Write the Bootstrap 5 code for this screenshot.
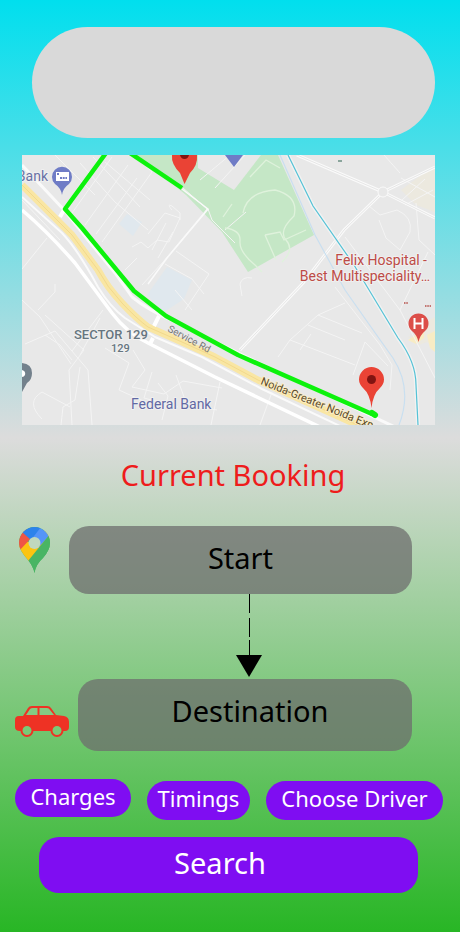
<!DOCTYPE html>
<html lang="en">
<head>
<meta charset="utf-8">
<meta name="viewport" content="width=device-width, initial-scale=1">
<title>Current Booking</title>
<link href="https://cdn.jsdelivr.net/npm/bootstrap@5.3.0/dist/css/bootstrap.min.css" rel="stylesheet">
<style>
body{min-height:100vh;font-family:"Noto Sans","Open Sans",sans-serif;background:linear-gradient(#00dfee 0%,#dcdcdc 47%,#28b625 100%) no-repeat}
.banner{height:111px;margin:27px 25px 17px 32px;background:#d9d9d9}
.map-box{margin:0 25px 0 22px}
.map-box svg{font-family:Roboto,sans-serif}
.page-title,.stop,.pill,.go{font-weight:400}
.page-title{font-size:29px;line-height:40px;margin:30px 0 31px;padding-left:6px;color:#ee1c1c}
.stop-row{padding-right:48px}
.stop-icon{flex:none;width:69px;padding-left:18px}
.car-icon{flex:none;width:78px;padding-left:15px}
.stop{font-size:29px;line-height:40px;border:0;border-radius:20px;background:rgba(110,110,110,.75);color:#000;min-height:68px;padding:10px 12px 14px}
.stop-end{min-height:72px;padding:10px 12px 18px 22px}
.arrow-row{padding-left:38px;height:85px}
.pills{padding:28px 17px 0 15px;gap:16px}
.pill{font-size:22px;line-height:30px;border:0;border-radius:20px;background:#7f0df2;color:#fff;height:39px;padding:2px 0 7px;white-space:nowrap}
.pill-first{height:38px;margin-bottom:3px;padding:2px 0 6px}
.go{font-size:29px;line-height:40px;border:0;border-radius:20px;background:#7f0df2;color:#fff;height:56px;padding:6px 17px 10px 0}
.go-row{padding:17px 42px 39px 39px}
.w-a{flex:116 1 0}.w-b{flex:103 1 0}.w-c{flex:177 1 0}
</style>
</head>
<body>
<main class="d-flex flex-column">
<div class="banner rounded-pill"></div>
<div class="map-box">
<svg class="d-block w-100 h-auto" viewBox="22 155 413 270" role="img" aria-label="Route map">
<rect x="22" y="155" width="413" height="270" fill="#e8e8e8"/>
<path d="M137 155H278L314 235L248 272L222 232L186 195Z" fill="#c5e7c6"/>
<path d="M198 155H261L234 190L198 168Z" fill="#e8e8e8"/>
<path d="M119 224L127 214L142 222L133 236ZM147 295L167 267L192 280L184 299L164 312Z" fill="#e0e8ee"/>
<path d="M401 190L435 165V212L416 205ZM408 337L424 330L424 323L435 317V350L427 342L419 345Z" fill="#ece9df"/>
<path d="M408 340L424 330V338L416 344ZM427 335L435 331V352L430 348Z" fill="#f8ecc4"/>
<!-- minor streets -->
<g fill="none" stroke="#f4f4f4" stroke-width="1">
<path d="M80 163L115 202L148 230M93 157L140 207M105 162L150 200M72 213L112 157M85 225L128 165M96 234L137 178M22 200L60 240M55 155L95 195M47 238L22 269M134 155L152 172L102 242M183 188L207 209L163 262L142 285M132 247L141 242L148 248L157 240L169 242L180 218L165 213L148 234M152 250L166 223M158 258L173 232M172 210Q166 203 172 206L180 213V220M176 251L209 274L185 310M208 209L212 220L235 243M200 180L230 155M215 188L245 155M165 264L192 279L204 294M175 290L192 310M125 270L137 258"/>
<path d="M242 296L240 284Q242 276 252 278M225 230L246 212M369 206L380 215L397 210Q413 217 410 232L400 250L386 238L379 220M384 155L400 173M401 178L435 197M402 200L425 179M405 205L433 190M335 287L380 345L392 365L390 390M416 203L419 240L435 255M345 237L400 310L435 378M400 310L428 252"/>
<path d="M45 315L84 350L69 370L72 425M100 318L80 355M80 367L75 400L63 407L61 425M45 335L60 345L72 360M25 344L55 331L88 370L92 425M105 348L129 363L119 390L150 404M133 350L145 370L132 387L164 394L183 381L222 388M158 383L168 396L162 420M176 375L187 405L217 410M152 372L144 398L178 407M220 382L211 425M22 300L40 317L71 364M103 310L72 351M42 419Q25 402 42 392L70 407M55 284V292L38 310"/>
<path d="M278 357L290 340L318 315L345 303M290 340L355 365M318 315L362 333M308 325L345 340M300 350L311 334M353 375L365 342L388 366M272 392L260 425"/>
</g>
<!-- main streets -->
<g fill="none" stroke="#fafafa" stroke-width="3"><path d="M297 155L383 192M435 167L383 192L344 230L304 282L240 350M383 192L435 218"/></g>
<g fill="none" stroke="#e6e6e6" stroke-width="1"><path d="M297 155L383 192M435 167L383 192L344 230L304 282L240 350M383 192L435 218"/></g>
<circle cx="383" cy="192" r="5" fill="#e8e8e8" stroke="#fafafa" stroke-width="1"/>
<g fill="none" stroke="#fafafa" stroke-width="1.5"><path d="M182 189L208 209L167 258L148 284"/></g>
<g fill="none" stroke="#dff2dc" stroke-width="1.3"><path d="M243 213Q247 192 275 190Q299 196 294 216Q278 231 286 240Q295 250 282 262M265 235L280 232L284 240L306 230M265 235L276 260M225 228Q241 230 240 241T255 265L262 272M250 177L266 160L280 168M223 217L232 204"/></g>
<!-- canal -->
<path d="M280 155L315 235L345 290Q373 330 393 358Q413 389 399 425" fill="none" stroke="#c9dff0" stroke-width="1.2"/>
<path d="M288 155L313 206L354 265L398 338Q416 362 416 385L418 425" fill="none" stroke="#f2f2f2" stroke-width="4"/>
<path d="M288 155L313 206L354 265L398 338Q416 362 416 385L418 425" fill="none" stroke="#54c2d6" stroke-width="1.2"/>
<!-- expressway -->
<g fill="none" stroke-linejoin="round">
<path d="M22 210Q48 232 75 263L112 313Q127 333 148 343L215 377L320 427" stroke="#fff" stroke-width="3.5"/>
<path d="M22 165L65 211L88 240L115 273L132 297Q148 310 175 322L255 361L395 427" stroke="#fafafa" stroke-width="3"/>
<path d="M22 197L62 233Q78 250 98 287Q110 307 125 318L155 337L202 357L262 389L342 427" stroke="#fafafa" stroke-width="2"/>
<path d="M22 185L72 235L98 270Q107 287 122 303T148 327L182 342L215 357L258 380L362 427" stroke="#f9e6a3" stroke-width="7"/>
<path d="M22 185L72 235L98 270Q107 287 122 303T148 327L182 342L215 357L258 380L362 427" stroke="#f2d98c" stroke-width="1"/>
<path d="M159 316L154 326M153 338L150 344M65 208L60 217" stroke="#fff" stroke-width="4"/>
</g>
<!-- route -->
<path d="M106 153L65 209L82 228L134 291L166 316L238 355L372 414" fill="none" stroke="#0cf20c" stroke-width="4.5" stroke-linejoin="round"/>
<path d="M130 153L182 188" stroke="#0cf20c" stroke-width="4.5"/>
<path d="M372 413L375 415" stroke="#0cf20c" stroke-width="6" stroke-linecap="round"/>
<!-- pins -->
<path d="M225 155H243L234 167Z" fill="#6f7cc6"/>
<path d="M172 155H197Q198 165 190 173L184.500 184L180 173Q171 164 172 155Z" fill="#ea4335"/><path d="M180 155H189Q188 159 184.500 159T180 155Z" fill="#811411"/>
<path d="M371.500 408Q370 394 363 388Q359 384 359 379.500A12.500 12.500 0 0 1 384 379.500Q384 384 380 388Q373 394 371.500 408Z" fill="#ea4335"/><circle cx="371.500" cy="379.500" r="4.500" fill="#811411"/>
<path d="M62 195Q61 188 55 184A10 10 0 1 1 69 184Q63 188 62 195Z" fill="#6f7cc6"/><path d="M56 172H69V181H56Z" fill="#fff"/><path d="M57 174H59M60 178H67" stroke="#6f7cc6" stroke-width="2" stroke-dasharray="2 .7"/>
<path d="M418.500 342Q417 335 412 331A10 10 0 1 1 425 331Q420 335 418.500 342Z" fill="#dc4e49"/><path d="M414.500 318V329M422.500 318V329M414.500 323.500H422.500" stroke="#fff" stroke-width="2"/>
<path d="M22 363Q32 364 32 373Q32 380 27 383L22 392Z" fill="#73818c"/><path d="M22 370Q26 371 25 375Q24 377 22 377Z" fill="#fff"/>
<path d="M338 161H342" stroke="#6b8f83" stroke-width="1.500"/><path d="M404 303H408M425 306H431" stroke="#b54f48" stroke-width="1.500" stroke-dasharray="1.500 .8"/>
<!-- labels -->
<g font-size="14" stroke="#f0f0f0" stroke-width="2" paint-order="stroke" stroke-linejoin="round">
<text x="48" y="181" text-anchor="end" fill="#6972a5">Bank</text>
<text x="131" y="409" fill="#6269a4">Federal Bank</text>
<text x="427" y="265" text-anchor="end" fill="#bd4b46">Felix Hospital -</text>
<text x="430" y="281" text-anchor="end" fill="#bd4b46">Best Multispeciality…</text>
<text x="74" y="339" font-size="13" font-weight="500" fill="#66757f">SECTOR 129</text>
<text x="111" y="352" font-size="11" font-weight="500" fill="#66757f">129</text>
<text font-size="10" fill="#777" stroke="none" transform="translate(167 331) rotate(28)">Service Rd</text>
<text font-size="11" fill="#5c4b2b" stroke="#fbeec5" transform="translate(260 384) rotate(22)">Noida-Greater Noida Exp</text>
</g>
</svg>
</div>
<h1 class="page-title text-center">Current Booking</h1>
<div class="stop-row d-flex align-items-start">
<div class="stop-icon"><svg class="d-block" width="33" height="48" viewBox="18 526 33 48" aria-hidden="true">
<defs><clipPath id="pinShape"><path d="M34.500 573Q33 566 28 560Q19 550 19 543A15.500 16 0 0 1 50 543Q50 550 43 558Q36 564 34.500 573Z"/></clipPath></defs>
<g clip-path="url(#pinShape)"><path d="M18 526H51V574H18Z" fill="#49b564"/><path d="M34.500 543L49 525L50 537L28 562L15 550L24 541Z" fill="#fcc411"/><path d="M40 526L31 538L38 548L51 534V526Z" fill="#5595f8"/><path d="M18 552L34 535L26 529H18Z" fill="#f05545"/><path d="M22 532L31 540L41 527L30 525Z" fill="#2d83eb"/><path d="M28 561L50 534V574H28Z" fill="#49b564"/></g><circle cx="34.500" cy="543" r="6" fill="#c0d8be"/></svg></div>
<button type="button" class="stop btn flex-grow-1">Start</button>
</div>
<div class="arrow-row d-flex justify-content-center"><svg width="28" height="85" viewBox="0 0 28 85" aria-hidden="true"><path d="M14.500 0V19M14.500 24V43M14.500 46V62" stroke="#000"/><path d="M1 61H27L14 83Z"/></svg></div>
<div class="stop-row d-flex align-items-start">
<div class="car-icon pt-4"><svg class="d-block" width="54" height="34" viewBox="15 703 54 34" aria-hidden="true"><path d="M23 716L28 708Q29 706 32 706H47Q50 706 51 708L56 715L64 716Q69 717 69 722V727Q69 731 65 731H20Q15 731 15 727V720Q15 716 19 716Z" fill="#ee3224"/><path d="M26 715L30 709Q31 708 33 708H37.500V715ZM39.500 708H47Q49 708 50 710L54 715H39.500Z" fill="#84cb83"/><circle cx="27" cy="730.500" r="5.500" fill="#78ca77" stroke="#ee3224" stroke-width="2"/><circle cx="57" cy="730.500" r="5.500" fill="#78ca77" stroke="#ee3224" stroke-width="2"/></svg></div>
<button type="button" class="stop stop-end btn flex-grow-1">Destination</button>
</div>
<div class="pills d-flex align-items-end">
<button type="button" class="pill pill-first btn w-a">Charges</button>
<button type="button" class="pill btn w-b">Timings</button>
<button type="button" class="pill btn w-c">Choose Driver</button>
</div>
<div class="go-row"><button type="button" class="go btn w-100">Search</button></div>
</main>
<script src="https://cdn.jsdelivr.net/npm/bootstrap@5.3.0/dist/js/bootstrap.bundle.min.js"></script>
</body>
</html>
